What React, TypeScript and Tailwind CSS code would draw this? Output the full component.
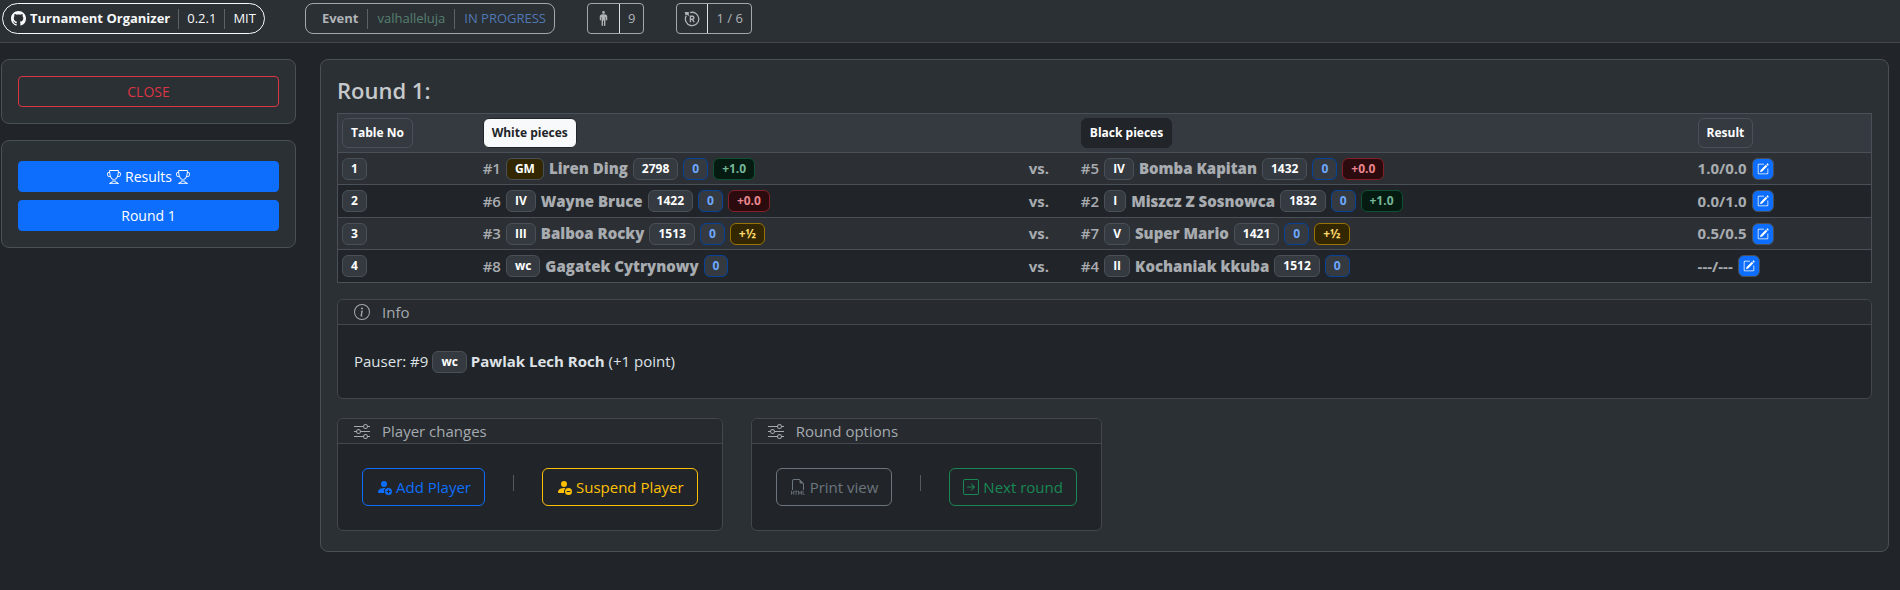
import type { ReactNode } from "react";
import {
  BsArrowRightSquare,
  BsFiletypeHtml,
  BsGithub,
  BsInfoCircle,
  BsPencilSquare,
  BsPersonFillAdd,
  BsPersonFillDash,
  BsPersonStanding,
  BsSliders,
  BsTrophy,
} from "react-icons/bs";

type Score = "win" | "loss" | "draw";

interface Player {
  no: number;
  title: string;
  name: string;
  rating?: number;
  points: number;
  score?: Score;
}

interface Pairing {
  white: Player;
  black: Player;
  result: string;
}

const pairings: Pairing[] = [
  {
    white: { no: 1, title: "GM", name: "Liren Ding", rating: 2798, points: 0, score: "win" },
    black: { no: 5, title: "IV", name: "Bomba Kapitan", rating: 1432, points: 0, score: "loss" },
    result: "1.0/0.0",
  },
  {
    white: { no: 6, title: "IV", name: "Wayne Bruce", rating: 1422, points: 0, score: "loss" },
    black: { no: 2, title: "I", name: "Miszcz Z Sosnowca", rating: 1832, points: 0, score: "win" },
    result: "0.0/1.0",
  },
  {
    white: { no: 3, title: "III", name: "Balboa Rocky", rating: 1513, points: 0, score: "draw" },
    black: { no: 7, title: "V", name: "Super Mario", rating: 1421, points: 0, score: "draw" },
    result: "0.5/0.5",
  },
  {
    white: { no: 8, title: "wc", name: "Gagatek Cytrynowy", points: 0 },
    black: { no: 4, title: "II", name: "Kochaniak kkuba", rating: 1512, points: 0 },
    result: "---/---",
  },
];

const tones = {
  neutral: "border-[#495057] bg-[#343a40] text-white",
  master: "border-[#495057] bg-[#332701] text-white",
  points: "border-[#084298] bg-[#343a40] text-[#6ea8fe]",
  win: "border-[#0f5132] bg-[#051b11] text-[#75b798]",
  loss: "border-[#842029] bg-[#2c0b0e] text-[#ea868f]",
  draw: "border-[#997404] bg-[#332701] text-[#ffda6a]",
};

const scoreText: Record<Score, string> = { win: "+1.0", loss: "+0.0", draw: "+½" };

function Badge({ tone = "neutral", children }: { tone?: keyof typeof tones; children: ReactNode }) {
  return (
    <span
      className={`inline-flex h-[22px] items-center rounded-md border px-2 text-xs font-bold leading-none ${tones[tone]}`}
    >
      {children}
    </span>
  );
}

function PlayerLine({ player }: { player: Player }) {
  return (
    <div className="flex items-center gap-[5px] whitespace-nowrap">
      <span className="font-semibold">#{player.no}</span>
      <Badge tone={player.title === "GM" ? "master" : "neutral"}>{player.title}</Badge>
      <span className="font-extrabold">{player.name}</span>
      {player.rating !== undefined && <Badge>{player.rating}</Badge>}
      <Badge tone="points">{player.points}</Badge>
      {player.score && <Badge tone={player.score}>{scoreText[player.score]}</Badge>}
    </div>
  );
}

function HeadBadge({ className, children }: { className: string; children: ReactNode }) {
  return (
    <span className={`inline-flex h-[30px] items-center rounded-md border px-2 text-xs font-bold ${className}`}>
      {children}
    </span>
  );
}

function RoundIcon() {
  return (
    <svg viewBox="0 0 16 16" className="size-4" fill="none" stroke="currentColor" aria-hidden="true">
      <path d="M6 1.6A6.7 6.7 0 1 1 2.2 4.8" strokeWidth="1.3" />
      <path d="M.6 1h4.2v4.2L3.4 3.9 1.6 4.2Z" fill="currentColor" stroke="none" />
      <path d="M6.4 11.2V5.3h2a1.5 1.5 0 0 1 0 3h-2M8.4 8.3l1.7 2.9" strokeWidth="1.4" />
    </svg>
  );
}

function Divider() {
  return <span className="h-5 w-px bg-[#5c6268]" />;
}

function Card({ icon, title, children }: { icon: ReactNode; title: string; children: ReactNode }) {
  return (
    <section className="rounded-md border border-[#43484d] bg-[#212529]">
      <h2 className="flex h-[25px] items-center gap-3 rounded-t-md border-b border-[#43484d] bg-[#272b2f] px-4 text-[15px] text-[#a5aaaf]">
        {icon}
        {title}
      </h2>
      {children}
    </section>
  );
}

const actionButton = "flex h-[38px] items-center gap-1 whitespace-nowrap rounded-md border px-[13px] text-[15px]";
const sideButton = "flex h-[31px] w-full items-center justify-center gap-1 rounded border text-sm";

export default function App() {
  return (
    <div className="min-h-screen bg-[#212529] font-['Open_Sans','Noto_Sans',sans-serif] text-[#dee2e6]">
      <header className="flex h-[43px] items-start border-b border-[#43484d] bg-[#2b3035] pl-[2px] pt-[3px] text-[13px]">
        <div className="flex h-[31px] items-center gap-2 rounded-full border border-[#f8f9fa] px-2 text-[#f8f9fa]">
          <a href="#home" className="flex items-center gap-1 whitespace-nowrap font-bold">
            <BsGithub className="size-[15px]" />
            Turnament Organizer
          </a>
          <Divider />
          <span>0.2.1</span>
          <Divider />
          <a href="#license">MIT</a>
        </div>
        <div className="ml-10 flex h-[31px] items-center gap-[9px] rounded-lg border border-[#a5a8ab] pl-4 pr-2 text-[#b0b3b6]">
          <span className="font-bold">Event</span>
          <Divider />
          <span className="text-[#56806f]">valhalleluja</span>
          <Divider />
          <span className="whitespace-nowrap text-[#5078b4]">IN PROGRESS</span>
        </div>
        <div className="ml-8 flex h-[31px] items-stretch rounded border border-[#a5a8ab] text-[#b0b3b6]">
          <span className="flex items-center border-r border-[#e0e2e4] px-2">
            <BsPersonStanding className="size-[15px]" />
          </span>
          <span className="flex items-center px-2">9</span>
        </div>
        <div className="ml-8 flex h-[31px] items-stretch rounded border border-[#a5a8ab] text-[#b0b3b6]">
          <span className="flex items-center border-r border-[#e0e2e4] px-[7px]">
            <RoundIcon />
          </span>
          <span className="flex items-center whitespace-nowrap px-2">1 / 6</span>
        </div>
      </header>

      <div className="flex items-start gap-6 pb-9 pl-px pr-[11px] pt-4">
        <aside className="flex w-[295px] shrink-0 flex-col gap-4">
          <div className="rounded-lg border border-[#495057] bg-[#2b3035] p-4">
            <button type="button" className={`${sideButton} border-[#dc3545] text-[#dc3545]`}>
              CLOSE
            </button>
          </div>
          <nav className="flex flex-col gap-2 rounded-lg border border-[#495057] bg-[#2b3035] px-4 pb-4 pt-5">
            <button type="button" className={`${sideButton} border-[#0d6efd] bg-[#0d6efd] text-white`}>
              <BsTrophy className="size-[14px]" />
              Results
              <BsTrophy className="size-[14px]" />
            </button>
            <button type="button" className={`${sideButton} border-[#0d6efd] bg-[#0d6efd] text-white`}>
              Round 1
            </button>
          </nav>
        </aside>

        <main className="min-w-0 flex-1 rounded-lg border border-[#495057] bg-[#2b3035] px-4 pb-5 pt-4">
          <h1 className="mb-2 text-[22px] font-semibold leading-[29px] text-[#c6c9cc]">Round 1:</h1>

          <table className="w-full table-fixed border-collapse border border-[#495057] text-left text-[15px] text-[#a8acb0]">
            <colgroup>
              <col className="w-[9.2%]" />
              <col className="w-[35.6%]" />
              <col className="w-[3.4%]" />
              <col />
              <col className="w-[11.6%]" />
            </colgroup>
            <thead>
              <tr className="h-[39px] border-b border-[#495057] bg-[#343a40]">
                <th scope="col" className="px-1 py-0">
                  <HeadBadge className="border-[#495057] bg-[#343a40] text-white">Table No</HeadBadge>
                </th>
                <th scope="col" className="px-1 py-0">
                  <HeadBadge className="border-[#212529] bg-[#f8f9fa] text-[#212529]">White pieces</HeadBadge>
                </th>
                <td />
                <th scope="col" className="px-1 py-0">
                  <HeadBadge className="border-[#212529] bg-[#212529] text-white">Black pieces</HeadBadge>
                </th>
                <th scope="col" className="px-1 py-0">
                  <HeadBadge className="border-[#495057] bg-[#343a40] text-white">Result</HeadBadge>
                </th>
              </tr>
            </thead>
            <tbody>
              {pairings.map((pairing, index) => (
                <tr
                  key={index}
                  className="h-8 border-b border-[#495057] odd:bg-[#2c3034] even:h-[33px] even:bg-[#212529]"
                >
                  <th scope="row" className="px-1 py-0">
                    <div className="flex">
                      <Badge>{index + 1}</Badge>
                    </div>
                  </th>
                  <td className="px-1 py-0">
                    <PlayerLine player={pairing.white} />
                  </td>
                  <td className="px-1 py-0 font-bold">vs.</td>
                  <td className="px-1 py-0">
                    <PlayerLine player={pairing.black} />
                  </td>
                  <td className="px-1 py-0">
                    <div className="flex items-center gap-[5px] whitespace-nowrap font-bold">
                      {pairing.result}
                      <button
                        type="button"
                        aria-label={`Edit result of table ${index + 1}`}
                        className="flex size-[22px] items-center justify-center rounded-md border border-[#495057] bg-[#0d6efd] text-white"
                      >
                        <BsPencilSquare className="size-3" />
                      </button>
                    </div>
                  </td>
                </tr>
              ))}
            </tbody>
          </table>

          <div className="mt-4">
            <Card icon={<BsInfoCircle className="size-4" />} title="Info">
              <p className="flex h-[73px] items-center gap-1 px-4 text-[15px]">
                <span>Pauser: #9</span>
                <Badge>wc</Badge>
                <strong className="font-bold">Pawlak Lech Roch</strong>
                <span>(+1 point)</span>
              </p>
            </Card>
          </div>

          <div className="mt-[19px] flex flex-wrap gap-7">
            <Card icon={<BsSliders className="size-4" />} title="Player changes">
              <div className="flex items-start gap-7 p-6">
                <button type="button" className={`${actionButton} border-[#0d6efd] text-[#0d6efd]`}>
                  <BsPersonFillAdd className="size-4" />
                  Add Player
                </button>
                <span className="mt-[7px] h-4 w-px bg-[#54595e]" />
                <button type="button" className={`${actionButton} border-[#ffc107] text-[#ffc107]`}>
                  <BsPersonFillDash className="size-4" />
                  Suspend Player
                </button>
              </div>
            </Card>
            <Card icon={<BsSliders className="size-4" />} title="Round options">
              <div className="flex items-start gap-7 p-6">
                <button type="button" className={`${actionButton} border-[#6c757d] text-[#6c757d]`}>
                  <BsFiletypeHtml className="size-4" />
                  Print view
                </button>
                <span className="mt-[7px] h-4 w-px bg-[#54595e]" />
                <button type="button" className={`${actionButton} border-[#198754] text-[#198754]`}>
                  <BsArrowRightSquare className="size-4" />
                  Next round
                </button>
              </div>
            </Card>
          </div>
        </main>
      </div>
    </div>
  );
}
